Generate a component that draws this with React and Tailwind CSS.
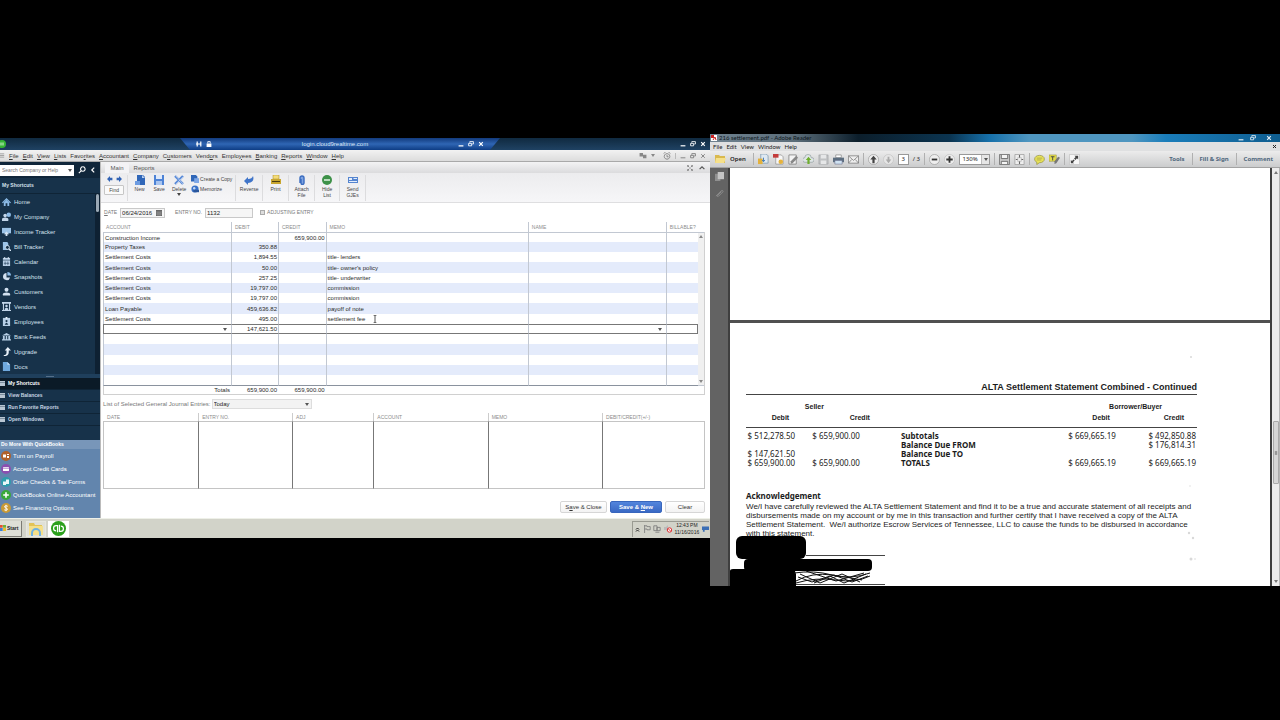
import React from "react";

const shortcuts = [
  ["Home", "home"],
  ["My Company", "company"],
  ["Income Tracker", "income"],
  ["Bill Tracker", "bill"],
  ["Calendar", "calendar"],
  ["Snapshots", "pie"],
  ["Customers", "person"],
  ["Vendors", "vendor"],
  ["Employees", "badge"],
  ["Bank Feeds", "bank"],
  ["Upgrade", "upgrade"],
  ["Docs", "doc"],
];

const sections = ["My Shortcuts", "View Balances", "Run Favorite Reports", "Open Windows"];

const offers = [
  ["Turn on Payroll", "payroll"],
  ["Accept Credit Cards", "card"],
  ["Order Checks & Tax Forms", "checks"],
  ["QuickBooks Online Accountant", "plus"],
  ["See Financing Options", "dollar"],
];

const qbMenu = [
  ["", "F", "ile"],
  ["", "E", "dit"],
  ["", "V", "iew"],
  ["", "L", "ists"],
  ["Favo", "r", "ites"],
  ["", "A", "ccountant"],
  ["", "C", "ompany"],
  ["C", "u", "stomers"],
  ["Vend", "o", "rs"],
  ["Emplo", "y", "ees"],
  ["", "B", "anking"],
  ["", "R", "eports"],
  ["", "W", "indow"],
  ["", "H", "elp"],
];

const entries = [
  ["Construction Income", "", "659,900.00", ""],
  ["Property Taxes", "350.88", "", ""],
  ["Settlement Costs", "1,894.55", "", "title- lenders"],
  ["Settlement Costs", "50.00", "", "title- owner's policy"],
  ["Settlement Costs", "257.25", "", "title- underwriter"],
  ["Settlement Costs", "19,797.00", "", "commission"],
  ["Settlement Costs", "19,797.00", "", "commission"],
  ["Loan Payable", "459,636.82", "", "payoff of note"],
  ["Settlement Costs", "495.00", "", "settlement fee"],
];

const statement = [
  ["$ 512,278.50", "$ 659,900.00", "Subtotals", "$ 669,665.19", "$ 492,850.88"],
  ["", "", "Balance Due FROM", "", "$ 176,814.31"],
  ["$ 147,621.50", "", "Balance Due TO", "", ""],
  ["$ 659,900.00", "$ 659,900.00", "TOTALS", "$ 669,665.19", "$ 669,665.19"],
];

/* ---------- drawings ---------- */

const navShapes = {
  home: <g fill="#8dbce8"><path d="M0 6 5 1l5 5-1 1-4-4-4 4z" /><path d="M2 6l3-3 3 3v4H6V7H4v3H2z" /></g>,
  company: <g fill="#c3d6ea"><circle cx="3.5" cy="4" r="2" /><path d="M0 10V8q0-2 3.500-2T7 8v2z" /><circle cx="7.500" cy="3" r="2.500" fill="#8dbce8" /></g>,
  income: <g><path d="M0 1h10v6H0z" fill="#9cc4e8" /><path d="M5 5l3 3H6v2H4V8H2z" fill="#d6e6f5" /></g>,
  bill: <g><path d="M1 0h5l1 2v7H1z" fill="#9cc4e8" /><circle cx="6" cy="6" r="2.200" fill="#17324a" stroke="#d6e6f5" /><path d="M7.500 7.500 10 10" stroke="#d6e6f5" strokeWidth="1.500" /></g>,
  calendar: <g><path d="M1 1h8v9H1z" fill="#b8cfe6" /><path d="M1 3.500h8M3.500 5v4M6.500 5v4M2 7h6" stroke="#17324a" strokeWidth=".6" /><path d="M3 0v2M7 0v2" stroke="#e5eef8" /></g>,
  pie: <g><path d="M5 5V1a4 4 0 1 0 4 5H5z" fill="#d3e1f0" /><path d="M6 4V0a4 4 0 0 1 4 4z" fill="#8dbce8" /></g>,
  person: <g fill="#d3e1f0"><circle cx="5" cy="3" r="2.200" /><path d="M1 9.500V8q0-2 4-2t4 2v1.500z" /></g>,
  vendor: <g fill="#c3d6ea"><path d="M0 0h10v2H0zM1 2h1.200v8H1zM7.800 2H9v8H7.800z" /><circle cx="5" cy="4.500" r="1.400" /><path d="M3 9V7.500q2-2 4 0V9zM0 9h10v1H0z" /></g>,
  badge: <g><path d="M1 1h8v9H1z" fill="#b8cfe6" /><path d="M4 0h2v2H4z" fill="#e5eef8" /><circle cx="5" cy="4.500" r="1.200" fill="#17324a" /><path d="M3 8.500q2-4 4 0z" fill="#17324a" /></g>,
  bank: <g fill="#b8cfe6"><path d="M0 4l5-3 5 3zM1 4.500h2V8H1zM4.200 4.500h1.600V8H4.200zM7 4.500h2V8H7zM0 8h10v1.500H0z" /></g>,
  upgrade: <path d="M2 9q3 0 3-3V4H3l3.500-4L10 4H7.500v2q0 4-5.500 4z" fill="#e8f0f8" />,
  doc: <g><path d="M1 0h5l3 3v7H1z" fill="#6fa9de" /><path d="M6 0v3h3z" fill="#c3dcf4" /></g>,
};

function NavIcon({ kind }) {
  return <svg viewBox="0 0 10 10" className="size-[9px] shrink-0" aria-hidden="true">{navShapes[kind]}</svg>;
}

const offerShapes = {
  payroll: <g><circle cx="5" cy="5" r="5" fill="#b0602a" /><path d="M2 3.500h3v3H2zM6 3h2v1H6zM6 5h2v2H6z" fill="#fff" /></g>,
  card: <g><circle cx="5" cy="5" r="5" fill="#8b50b0" /><rect x="2" y="3" width="6" height="4" rx=".6" fill="#fff" /><path d="M2 4.200h6" stroke="#8b50b0" strokeWidth=".7" /></g>,
  checks: <g><circle cx="5" cy="5" r="5" fill="#2f9dac" /><path d="M2 4.500h3V8H2zM5 2.500h3V7H5z" fill="#e8f7f8" /></g>,
  plus: <g><circle cx="5" cy="5" r="5" fill="#3aa83a" /><path d="M4.200 2.200h1.600v2h2v1.600h-2v2H4.200v-2h-2V4.200h2z" fill="#fff" /></g>,
  dollar: <g><circle cx="5" cy="5" r="5" fill="#c99a35" /><path d="M6.800 3.300Q5 2.300 3.800 3.200T5 5t1.200 1.800-3 0M5 1.800v6.400" fill="none" stroke="#fff" strokeWidth=".9" /></g>,
};

function OfferIcon({ kind }) {
  return <svg viewBox="0 0 10 10" className="size-[10px] shrink-0" aria-hidden="true">{offerShapes[kind]}</svg>;
}

const toolShapes = {
  new: <g><path d="M2 0h6l2 2v8H2z" fill="#2f66b8" /><path d="M0 6h5v4H0z" fill="#6d9be0" /><path d="M7 0v3h3" fill="#b9d0f2" /></g>,
  save: <g><path d="M0 0h10v10H0z" fill="#4d83d6" /><path d="M2 0h6v4H2z" fill="#dfe9f9" /><path d="M2 6h6v4H2z" fill="#a9c5f0" /></g>,
  delete: <g stroke="#5a8bd8" strokeWidth="2.400" fill="none"><path d="M1 1l8 8M9 1L1 9" /><path d="M2 1l7 8M9 2L2 9" stroke="#dbe7fa" strokeWidth=".6" /></g>,
  copy: <g><path d="M0 0h6l2 2v6H0z" fill="#2f66b8" /><path d="M4 4h6v6H4z" fill="#7ea7e6" /></g>,
  memorize: <g><circle cx="5" cy="5" r="4.500" fill="#3a72c8" /><path d="M3 6h7v3H3z" fill="#2a569c" /><circle cx="4" cy="4" r="1.500" fill="#c6d9f5" /></g>,
  reverse: <path d="M0 6l4-4v2q4 0 5-3 2 6-5 7v2z" fill="#3f74c9" />,
  print: <g><path d="M2 0h6v4H2z" fill="#f3dc7a" stroke="#a88a20" strokeWidth=".5" /><path d="M0 4h10v5H0z" fill="#c8a62f" /><path d="M1 6h8v1H1z" fill="#4a3d10" /></g>,
  attach: <path d="M3 8V3a2 2 0 0 1 4 0v5a1.500 1.500 0 0 1-3 0V4" fill="#7ea3e0" stroke="#3a6cc0" strokeWidth="1.400" />,
  hide: <g><circle cx="5" cy="5" r="5" fill="#3d9148" /><path d="M2 4.200h6v1.600H2z" fill="#d6efd9" /></g>,
  send: <g><path d="M0 2h10v6H0z" fill="#5585d0" /><path d="M1 3h3v2H1zM5.500 3h3.500v1H5.500zM1 6h8v1H1z" fill="#e3edfb" /></g>,
};

function ToolIcon({ kind, className = "size-[10px]" }) {
  return <svg viewBox="0 0 10 10" className={className} aria-hidden="true">{toolShapes[kind]}</svg>;
}

function Glyph({ d, className = "size-[6px]", w = 1.4 }) {
  return (
    <svg viewBox="0 0 10 10" className={className} fill="none" stroke="currentColor" strokeWidth={w} aria-hidden="true">
      <path d={d} />
    </svg>
  );
}

const MIN = "M1 8h8";
const RESTORE = "M3 3V1h6v4H7M1 4h5v4H1z";
const CLOSE = "M2 2l6 6M8 2L2 8";

function Caret({ className = "text-[#555]" }) {
  return <svg viewBox="0 0 4 3" className={"h-[3px] w-1 shrink-0 " + className} aria-hidden="true"><path d="M0 0h4L2 3z" fill="currentColor" /></svg>;
}

/* ---------- accounting window ---------- */

function TitleBar() {
  return (
    <header className="grid h-3 grid-cols-[180fr_320fr_210fr] items-center bg-linear-to-b from-[#102a40] to-[#1f4263] text-white">
      <svg viewBox="0 0 8 8" className="size-2 -translate-x-0.5" aria-hidden="true">
        <circle cx="4" cy="4" r="4" fill="#35b535" />
        <path d="M3 2.500v3M5 2.500v3" stroke="#d9f5d9" />
      </svg>
      <div className="flex h-3 items-center justify-between bg-linear-to-b from-[#123a7c] via-[#2f66b4] to-[#0e3d85] pr-4 pl-4 [clip-path:polygon(0_0,100%_0,calc(100%-10px)_100%,10px_100%)]">
        <span className="flex gap-1">
          <Glyph d="M0 5h2M2 1v8M2 5h6M8 1v8" w={2} />
          <svg viewBox="0 0 10 10" className="size-[6px]" aria-hidden="true"><path d="M1 4h8v6H1z" fill="#fff" /><path d="M3 4V1h4v3" fill="none" stroke="#fff" strokeWidth="1.400" /></svg>
        </span>
        <h1 className="text-[6px] leading-none text-[#dce8f8]">login.cloud9realtime.com</h1>
        <span className="flex gap-1">
          <button aria-label="Minimize session"><Glyph d={MIN} w={2} /></button>
          <button aria-label="Restore session"><Glyph d={RESTORE} /></button>
          <button aria-label="Close session"><Glyph d={CLOSE} w={2} /></button>
        </span>
      </div>
      <div className="flex justify-end gap-1 pr-1">
        <button aria-label="Minimize"><Glyph d={MIN} w={2} /></button>
        <button aria-label="Restore"><Glyph d={RESTORE} /></button>
        <button aria-label="Close"><Glyph d={CLOSE} w={2} /></button>
      </div>
    </header>
  );
}

function MenuBar() {
  return (
    <div className="flex h-3 items-center justify-between border-b border-[#a9a9a9] bg-linear-to-b from-[#f2f2f2] to-[#dcdcdc] pr-1 text-[#333]">
      <nav className="flex items-center gap-1 text-[6px] leading-none" aria-label="Menu">
        <svg viewBox="0 0 6 6" className="size-[5px]" aria-hidden="true"><path d="M0 1h5M0 3h5M0 5h5" stroke="#999" /></svg>
        {qbMenu.map(([a, u, b]) => (
          <button key={a + u + b}>{a}<u>{u}</u>{b}</button>
        ))}
      </nav>
      <div className="flex items-center gap-1 text-[#777]">
        <svg viewBox="0 0 8 7" className="h-[6px] w-2" aria-hidden="true"><path d="M0 0h4v4H0zM4 2h4v4H4z" fill="#888" /></svg>
        <Caret className="text-[#888]" />
        <Glyph d="M5 2a3.500 3.500 0 1 0 .1 0M5 3.500V6h2M1 2l2-2M9 2L7 0" className="ml-1 size-2" w={1} />
        <span className="h-[6px] border-l border-[#bbb]" />
        <button aria-label="Minimize form"><Glyph d={MIN} /></button>
        <button aria-label="Restore form"><Glyph d={RESTORE} /></button>
        <button aria-label="Close form"><Glyph d={CLOSE} /></button>
      </div>
    </div>
  );
}

function Sidebar() {
  return (
    <aside className="flex w-[14.1%] shrink-0 flex-col bg-[#17324a] text-[6px] leading-none whitespace-nowrap text-[#d5e0ea]">
      <div className="flex h-4 items-center bg-[#10263a] text-white">
        <div className="flex h-[11px] w-[74px] items-center bg-white pr-[2px]">
          <input aria-label="Search Company or Help" placeholder="Search Company or Help" className="h-full min-w-0 flex-1 bg-transparent pl-[2px] text-[5px] text-[#444] placeholder:text-[#777]" />
          <Caret />
        </div>
        <button aria-label="Search" className="ml-1"><Glyph d="M6 1a2.800 2.800 0 1 0 .1 0M4 6L1 9" className="size-2" /></button>
        <button aria-label="Collapse sidebar" className="mr-1 ml-auto"><Glyph d="M7 1L3 5l4 4" w={2} /></button>
      </div>
      <h2 className="flex h-4 items-center border-b border-[#0f2436] pl-[2px] text-[5px] font-bold">My Shortcuts</h2>
      <div className="flex">
        <nav className="flex-1" aria-label="Shortcuts">
          {shortcuts.map(([label, kind]) => (
            <a key={label} href="#" className="flex h-[15px] items-center gap-[3px] pl-[2px]"><NavIcon kind={kind} />{label}</a>
          ))}
        </nav>
        <div className="w-[5px] bg-[#0e2133]"><div className="mr-px ml-px h-[18px] rounded-sm bg-[#9aa8b5]" /></div>
      </div>
      <div className="flex h-1 items-center justify-center bg-[#1f3f5c]"><span className="h-px w-2 bg-[#56708a]" /></div>
      <div className="flex-1">
        {sections.map((label, i) => (
          <button key={label} className={"flex h-3 w-full items-center gap-[3px] border-b border-[#0f2436] text-[5px] font-bold " + (i === 0 ? "bg-[#0b1a27] text-white" : "text-[#c8d5e2]")}>
            <svg viewBox="0 0 5 5" className="size-[5px]" aria-hidden="true"><path d="M0 0h5v5H0z" fill="#b9c6d2" /><path d="M0 1.500h5" stroke="#54687b" strokeWidth=".6" /></svg>
            {label}
          </button>
        ))}
      </div>
      <section className="bg-[#6285ad] text-white">
        <h2 className="flex h-[9px] items-center bg-[#7896b9] pl-px text-[5px] font-bold">Do More With QuickBooks</h2>
        <div className="flex flex-col gap-[3px] pt-[2px] pb-[5px]">
          {offers.map(([label, kind]) => (
            <a key={label} href="#" className="flex items-center gap-[2px] pl-px"><OfferIcon kind={kind} />{label}</a>
          ))}
        </div>
      </section>
    </aside>
  );
}

function Tool({ kind, lines, className, caret }) {
  return (
    <button className={"flex h-[26px] flex-col items-center " + className}>
      <ToolIcon kind={kind} />
      <span className="mt-px text-center leading-[6px]">{lines[0]}{lines[1] && <br />}{lines[1]}</span>
      {caret && <Caret className="mt-px" />}
    </button>
  );
}

function Toolbar() {
  const sep = " border-r border-[#dcdcde]";
  return (
    <div className="flex h-[30px] items-start border-b border-[#dedee0] bg-linear-to-b from-[#ececee] to-[#f6f6f8] pt-[2px] pl-[3px] text-[5px] text-[#444]">
      <div className={"flex h-[26px] w-6 flex-col items-start gap-[3px]" + sep}>
        <div className="flex w-5 justify-center gap-[3px] pt-px">
          <button aria-label="Previous"><svg viewBox="0 0 10 10" className="size-[6px]"><path d="M0 5l5-5v3h4v4H5v3z" fill="#3163b5" /></svg></button>
          <button aria-label="Next"><svg viewBox="0 0 10 10" className="size-[6px]"><path d="M10 5L5 0v3H1v4h4v3z" fill="#3163b5" /></svg></button>
        </div>
        <button className="h-[10px] w-5 rounded-[1px] border border-[#c6c6c6] bg-[#fafafa] leading-none">Find</button>
      </div>
      <Tool kind="new" lines={["New"]} className="w-[23px]" />
      <Tool kind="save" lines={["Save"]} className="w-4" />
      <Tool kind="delete" lines={["Delete"]} className="w-6" caret />
      <div className={"flex h-[26px] w-[45px] flex-col items-start gap-[2px]" + sep}>
        <button className="flex items-center gap-px whitespace-nowrap leading-none"><ToolIcon kind="copy" className="size-2" />Create a Copy</button>
        <button className="flex items-center gap-px leading-none"><ToolIcon kind="memorize" className="size-2" />Memorize</button>
      </div>
      <Tool kind="reverse" lines={["Reverse"]} className={"w-[27px]" + sep} />
      <Tool kind="print" lines={["Print"]} className={"w-[26px]" + sep} />
      <Tool kind="attach" lines={["Attach", "File"]} className={"w-[26px]" + sep} />
      <Tool kind="hide" lines={["Hide", "List"]} className={"w-[25px]" + sep} />
      <Tool kind="send" lines={["Send", "GJEs"]} className={"w-[26px]" + sep} />
    </div>
  );
}

function EntryForm() {
  return (
    <form className="flex h-[19px] items-center px-[3px] text-[5px] leading-none text-[#777]">
      <label htmlFor="date" className="w-4"><u>D</u>ATE</label>
      <div className="flex h-[10px] w-[45px] items-center justify-between border border-[#c9c9c9] bg-[#f6f6f6] px-px">
        <input id="date" defaultValue="06/24/2016" className="h-full w-8 bg-transparent text-[6px] text-[#222]" />
        <svg viewBox="0 0 6 6" className="mr-px size-[6px]" aria-hidden="true"><path d="M0 0h6v6H0z" fill="#666" /><path d="M0 2h6M2 2v4M4 2v4M0 4h6" stroke="#bbb" strokeWidth=".4" /></svg>
      </div>
      <label htmlFor="entryno" className="mr-[6px] ml-[10px] w-6 whitespace-nowrap">ENTRY NO.</label>
      <input id="entryno" defaultValue="1132" className="h-[10px] w-12 border border-[#c9c9c9] bg-[#f6f6f6] px-px text-[6px] text-[#222]" />
      <input id="adjusting" type="checkbox" className="mr-[2px] ml-[7px] size-[5px] appearance-none border border-[#aaa] bg-[#ddd]" />
      <label htmlFor="adjusting" className="whitespace-nowrap">ADJUSTING ENTRY</label>
    </form>
  );
}

function Journal() {
  const th = "h-[10px] p-0 pl-[3px] text-left align-middle text-[5px] font-normal text-[#8c8c8c]";
  const line = " border-l border-[#c2c8d2]";
  return (
    <div className="flex pr-[5px] pl-[2px]">
      <table className="flex-1 table-fixed border-separate border-spacing-0 text-[6px] leading-none text-[#2b2b2b]">
        <colgroup>
          <col className="w-[21.5%]" /><col className="w-[7.9%]" /><col className="w-[8%]" /><col className="w-[34%]" /><col className="w-[23.2%]" /><col />
        </colgroup>
        <thead>
          <tr>
            <th className={th}>ACCOUNT</th>
            <th className={th + line}>DEBIT</th>
            <th className={th + line}>CREDIT</th>
            <th className={th + line}>MEMO</th>
            <th className={th + line}>NAME</th>
            <th className={th + line}>BILLABLE?</th>
          </tr>
        </thead>
        <tbody>
          {entries.map(([account, debit, credit, memo], i) => {
            const edge = line + (i === 0 ? " border-t" : "");
            return (
              <tr key={i} className={i % 2 ? "bg-[#e4ebfb]" : "bg-white"}>
                <td className={"p-0 pl-px" + edge + (i === 3 || i === 7 ? " h-[11px]" : " h-[10px]")}>{account}</td>
                <td className={"p-0 pr-px text-right" + edge}>{debit}</td>
                <td className={"p-0 pr-px text-right" + edge}>{credit}</td>
                <td className={"p-0 pl-px" + edge}>
                  {i === 8 ? (
                    <span className="flex h-[6px] items-center gap-[6px]">{memo}<Glyph d="M3 0h1.500l.5 1 .5-1H7M5 1v8M3 10h1.500l.5-1 .5 1H7" className="size-2" w={1} /></span>
                  ) : memo}
                </td>
                <td className={"p-0" + edge} />
                <td className={"p-0" + edge} />
              </tr>
            );
          })}
          <tr className="bg-white">
            <td className="h-[10px] border-y border-l border-[#777] p-0 pr-1">
              <div className="flex items-center"><input aria-label="Account" className="h-2 min-w-0 flex-1 text-[6px]" /><Caret /></div>
            </td>
            <td className="border-y border-l border-y-[#777] border-l-[#c2c8d2] p-0 pr-px text-right">147,621.50</td>
            <td className="border-y border-l border-y-[#777] border-l-[#c2c8d2] p-0" />
            <td className="border-y border-l border-y-[#777] border-l-[#c2c8d2] p-0" />
            <td className="border-y border-l border-y-[#777] border-l-[#c2c8d2] p-0 pr-1"><div className="flex justify-end"><Caret /></div></td>
            <td className="border border-[#777] border-l-[#c2c8d2] p-0" />
          </tr>
          {[0, 1, 2, 3, 4].map((i) => (
            <tr key={i} className={i % 2 ? "bg-[#e4ebfb]" : "bg-white"}>
              {[0, 1, 2, 3, 4, 5].map((c) => (
                <td key={c} className={"p-0" + line + (i === 4 ? " h-[11px] border-b border-b-[#8a929e]" : i === 1 ? " h-[11px]" : " h-[10px]")} />
              ))}
            </tr>
          ))}
        </tbody>
        <tfoot>
          <tr>
            <td className="h-[9px] border-b border-l border-[#d0d0d0] p-0 pr-px text-right">Totals</td>
            <td className="border-b border-[#d0d0d0] p-0 pr-px text-right">659,900.00</td>
            <td className="border-b border-[#d0d0d0] p-0 pr-px text-right">659,900.00</td>
            <td colSpan={3} className="border-b border-[#d0d0d0] p-0" />
          </tr>
        </tfoot>
      </table>
      <div className="mt-[10px] flex w-[7px] flex-col border-r border-b border-[#d0d0d0]">
        <div className="flex flex-1 flex-col items-center justify-between border-y border-[#c2c8d2] bg-[#f0f0f0] py-[2px]">
          <Caret className="rotate-180 text-[#888]" />
          <Caret className="text-[#888]" />
        </div>
        <div className="h-2" />
      </div>
    </div>
  );
}

function SelectedEntries() {
  const cols = ["DATE", "ENTRY NO.", "ADJ", "ACCOUNT", "MEMO", "DEBIT/CREDIT(+/-)"];
  return (
    <section className="flex-1 pr-[5px] pl-[2px]">
      <div className="flex h-[18px] items-center gap-px text-[6px] leading-none text-[#777]">
        <label htmlFor="period" className="whitespace-nowrap">List of Selected General Journal Entries:</label>
        <div className="relative w-[100px]">
          <select id="period" className="h-[10px] w-full appearance-none border border-[#ddd] bg-[#f3f3f3] pl-px text-[6px] leading-none text-[#222]"><option>Today</option></select>
          <span className="pointer-events-none absolute top-[4px] right-[3px]"><Caret /></span>
        </div>
      </div>
      <table className="w-full table-fixed border-separate border-spacing-0 text-[5px] leading-none text-[#8c8c8c]">
        <colgroup><col className="w-[15.8%]" /><col className="w-[15.6%]" /><col className="w-[13.5%]" /><col className="w-[19%]" /><col className="w-[19%]" /><col /></colgroup>
        <thead>
          <tr>
            {cols.map((c, i) => (
              <th key={c} className={"h-2 border-l p-0 pl-[3px] text-left font-normal whitespace-nowrap " + (i ? "border-[#ccc]" : "border-transparent")}>{c}</th>
            ))}
          </tr>
        </thead>
        <tbody>
          <tr>
            {cols.map((c, i) => (
              <td key={c} className={"h-[68px] border-y border-l border-y-[#c4c4c4] p-0 " + (i === 0 ? "border-l-[#c4c4c4]" : i === 5 ? "border-r border-l-[#777] border-r-[#c4c4c4]" : "border-l-[#777]")} />
            ))}
          </tr>
        </tbody>
      </table>
    </section>
  );
}

function FormButtons() {
  const plain = "h-3 rounded-[2px] border border-[#d6d6d6] bg-linear-to-b from-white to-[#f3f3f3] text-[#333]";
  return (
    <div className="flex justify-end gap-[3px] pr-[5px] pb-[5px] text-[6px] leading-none">
      <button className={plain + " w-[47px]"}>S<u>a</u>ve &amp; Close</button>
      <button className="h-3 w-[52px] rounded-[2px] border border-[#3866bd] bg-linear-to-b from-[#5385dd] to-[#3a69c4] font-bold text-white">Save &amp; <u>N</u>ew</button>
      <button className={plain + " w-[40px]"}>Clear</button>
    </div>
  );
}

function QbLogo() {
  return (
    <svg viewBox="0 0 16 16" className="size-[15px]" aria-hidden="true">
      <circle cx="8" cy="8" r="8" fill="#2ca01c" />
      <g fill="none" stroke="#fff" strokeWidth="1.300">
        <path d="M7 12V5H5.500a2.600 2.600 0 0 0 0 5.500" />
        <path d="M9 4v7h1.500a2.600 2.600 0 0 0 0-5.500" />
      </g>
    </svg>
  );
}

function Taskbar() {
  return (
    <footer className="flex h-5 items-center border-t border-[#eef0e8] bg-[#d2d3c9] text-[6px] leading-none text-[#222]">
      <button className="flex h-4 w-[22px] items-center gap-px border-r border-b border-[#7b7b74] bg-[#dedfd6] font-bold">
        <svg viewBox="0 0 6 6" className="size-[6px] shrink-0" aria-hidden="true"><path d="M0 0h2.700v2.700H0z" fill="#e5502c" /><path d="M3 0h3v2.700H3z" fill="#6eb33a" /><path d="M0 3h2.700v3H0z" fill="#3b7fd4" /><path d="M3 3h3v3H3z" fill="#edbc2d" /></svg>
        <span className="text-[5px]">Start</span>
      </button>
      <button aria-label="File Explorer" className="ml-1 flex h-4 w-5 items-center justify-center border border-[#e6e7df] bg-[#dfe0d8]">
        <svg viewBox="0 0 14 14" className="size-[14px]" aria-hidden="true"><path d="M0 1h5l1 2h7v9H0z" fill="#e3c455" /><path d="M0 4h14v9H0z" fill="#f5e08a" /><path d="M3 14V11a4 4 0 0 1 8 0v3" fill="none" stroke="#6fb2e2" strokeWidth="2" /></svg>
      </button>
      <button aria-label="QuickBooks" className="ml-[2px] flex h-4 w-[21px] items-center justify-center bg-white"><QbLogo /></button>
      <div className="mr-px ml-auto flex h-4 w-[77px] items-center justify-between border-t border-l border-[#9a9b92] pl-[2px]">
        <Glyph d="M2 5l3-3 3 3M2 9l3-3 3 3" className="size-[5px]" w={2} />
        <Glyph d="M2 0v10M2 1h3v1h4v4H5V5H2" className="size-2 text-[#777]" w={1} />
        <Glyph d="M1 1h4v6H1zM5 3h4v4H5zM3 9h5" className="size-2 text-[#777]" w={1} />
        <svg viewBox="0 0 8 8" className="size-2" aria-hidden="true"><path d="M0 2h2l2-2v6L2 5H0z" fill="#bbb" /><circle cx="5.500" cy="5" r="2.200" fill="#fff" stroke="#d33" /><path d="M4 3.500l3 3" stroke="#d33" /></svg>
        <div className="w-[25px] text-center text-[5px] leading-[7px]">12:43 PM<br />11/16/2016</div>
        <svg viewBox="0 0 8 6" className="h-[6px] w-[7px]" aria-hidden="true"><path d="M0 0h8v4H3v2H1V4H0z" fill="#3b6fb5" /></svg>
      </div>
    </footer>
  );
}

function AccountingWindow() {
  return (
    <section className="mt-1 flex min-h-[400px] min-w-0 flex-col bg-white" aria-label="QuickBooks">
      <TitleBar />
      <MenuBar />
      <div className="flex flex-1">
        <Sidebar />
        <main className="flex min-w-0 flex-1 flex-col border-l border-[#bbb]">
          <div className="flex h-[11px] items-end justify-between bg-linear-to-b from-[#f3f3f4] to-[#dbdbdd] text-[6px] leading-none text-[#555]">
            <div role="tablist" className="flex items-center">
              <button role="tab" aria-selected="true" className="ml-1 h-[10px] w-6 rounded-t-[2px] bg-[#f3f3f5]">Main</button>
              <button role="tab" aria-selected="false" className="h-[10px] w-[30px]">Reports</button>
            </div>
            <div className="flex items-center gap-[6px] pr-[5px] pb-[2px]">
              <button aria-label="Expand"><Glyph d="M1 1l3 3M9 1L6 4M1 9l3-3M9 9L6 6M1 3V1h2M7 1h2v2M1 7v2h2M7 9h2V7" w={1} /></button>
              <button aria-label="Collapse"><Glyph d="M1 7l4-4 4 4" w={2} /></button>
            </div>
          </div>
          <Toolbar />
          <EntryForm />
          <Journal />
          <SelectedEntries />
          <FormButtons />
        </main>
      </div>
      <Taskbar />
    </section>
  );
}

/* ---------- document reader ---------- */

const readerShapes = {
  folder: <g><path d="M1 2h4l1 1h5v7H1z" fill="#d9b94e" /><path d="M2 5h10l-2 5H1z" fill="#f5e08a" /></g>,
  export: <g><path d="M3 0h6l2 2v8H3z" fill="#dfe9f2" stroke="#6b8aa5" strokeWidth=".7" /><path d="M0 5h5v6H0z" fill="#e3b13c" /><path d="M6 4v4M4.500 6.500L6 8.500l1.500-2" stroke="#3e79b8" fill="none" /></g>,
  pdf: <g><path d="M3 1h6l2 2v8H3z" fill="#f7f7f7" stroke="#888" strokeWidth=".7" /><path d="M0 0h6v4H0z" fill="#c43c3c" /><circle cx="8.500" cy="8.500" r="2.500" fill="#e6b33c" /></g>,
  edit: <g><path d="M1 1h8v10H1z" fill="#f4f4f4" stroke="#777" strokeWidth=".8" /><path d="M3 8l6-6 2 2-6 6-2 .5z" fill="#888" /></g>,
  cloud: <g><path d="M2 9a2.500 2.500 0 0 1 0-5 3.500 3.500 0 0 1 7 0 2.500 2.500 0 0 1 1 5z" fill="#dfe5e6" stroke="#8a9a9a" strokeWidth=".7" /><path d="M6 3l3 3.500H7.200V11H4.800V6.500H3z" fill="#6fae2e" /></g>,
  save: <g><path d="M1 1h10v10H1z" fill="#bfc1c3" stroke="#9a9c9e" strokeWidth=".6" /><path d="M3 1h6v4H3zM3 7h6v4H3z" fill="#e6e7e8" /></g>,
  print: <g><path d="M3 1h6v3H3z" fill="#fff" stroke="#666" strokeWidth=".6" /><path d="M0 4h12v5H0z" fill="#5d6f80" /><path d="M2 7h8v4H2z" fill="#cfe2f2" stroke="#557" strokeWidth=".5" /></g>,
  mail: <g fill="#eee" stroke="#777" strokeWidth=".8"><path d="M.5 2h11v8H.5z" /><path d="M.5 2L6 7l5.500-5M.5 10L4 6M11.500 10L8 6" fill="none" /></g>,
  up: <g><circle cx="6" cy="6" r="5.500" fill="#eee" stroke="#999" strokeWidth=".7" /><path d="M6 2l3.500 4H7.200v4H4.800V6H2.500z" fill="#444" /></g>,
  down: <g><circle cx="6" cy="6" r="5.500" fill="#e6e6e6" stroke="#c2c2c2" strokeWidth=".7" /><path d="M6 10l3-4H7V3H5v3H3z" fill="#aaa" /></g>,
  minus: <g><circle cx="6" cy="6" r="5.500" fill="#eee" stroke="#999" strokeWidth=".7" /><path d="M3 5h6v2H3z" fill="#333" /></g>,
  plus: <g><circle cx="6" cy="6" r="5.500" fill="#eee" stroke="#bbb" strokeWidth=".7" /><path d="M5 2.500h2V5h2.500v2H7v2.500H5V7H2.500V5H5z" fill="#333" /></g>,
  width: <g><path d="M.5.5h11v11H.5z" fill="#ccc" stroke="#777" /><path d="M2.500 1v4h7V1M2.500 11V8h7v3" fill="#f4f4f4" stroke="#666" /></g>,
  fit: <g><path d="M1 .5h10v11H1z" fill="#eee" stroke="#999" strokeWidth=".8" /><path d="M6 1v3M6 8v3M2 6h2M8 6h2" stroke="#666" strokeWidth="1.200" /><path d="M4 4h4v4H4z" fill="none" stroke="#999" strokeWidth=".5" /></g>,
  comment: <g><path d="M6 1.500c3 0 5.300 1.500 5.300 4S9 9.500 6 9.500L3 11.500V9C1.500 8.200.7 7 .7 5.500c0-2.500 2.300-4 5.300-4z" fill="#e8e25a" stroke="#8d8a3a" strokeWidth=".7" /><path d="M3 4.500h6M3 6.500h5" stroke="#8d8a3a" strokeWidth=".6" /></g>,
  mark: <g><path d="M0 1h8v7H0z" fill="#e3dc4a" stroke="#8d8a3a" strokeWidth=".5" /><path d="M2 3h4M4 3v4" stroke="#444" /><path d="M6 8l4-5 2 1-4 6-2 1z" fill="#777" /></g>,
  full: <g><path d="M.5.500h11v11H.5z" fill="#f6f6f6" stroke="#bbb" strokeWidth=".7" /><path d="M6 2h4v4L8.700 4.700 7 6.500 5.500 5l1.800-1.700zM2 6.500l1.200 1.200L5 6l1.200 1.200-1.900 1.900L5.500 10H2z" fill="#444" /></g>,
};

function ReaderTool({ kind, label }) {
  return (
    <button aria-label={label}><svg viewBox="0 0 12 12" className="size-[11px] shrink-0" aria-hidden="true">{readerShapes[kind]}</svg></button>
  );
}

function Sep() {
  return <span className="h-3 border-l border-[#b0b0b0]" />;
}

function ReaderWindow() {
  return (
    <section className="flex min-w-0 flex-col bg-[#636363]" aria-label="Adobe Reader">
      <header className="flex h-2 items-center gap-[2px] bg-[linear-gradient(to_right,#6f8290_0%,#5b6d79_15%,#0c1e2b_26%,#0b3450_42%,#1670aa_49%,#4f96c0_56%,#4f96c0_74%,#1a7dba_80%,#0f5d8f_100%)] pl-px font-['Lato',sans-serif] text-[6px] leading-none text-[#0d161c]">
        <svg viewBox="0 0 6 6" className="size-[6px]" aria-hidden="true"><path d="M0 0h6v6H0z" fill="#fff" /><path d="M0 0h3v3H0z" fill="#c22" /><path d="M2 5l2-3 1 3" fill="none" stroke="#c22" /></svg>
        <h1>216 settlement.pdf - Adobe Reader</h1>
        <span className="mr-2 ml-auto flex gap-[6px] text-[#e5eef5]">
          <button aria-label="Minimize reader"><Glyph d={MIN} w={2} /></button>
          <button aria-label="Restore reader"><Glyph d={RESTORE} /></button>
          <button aria-label="Close reader" className="ml-1"><Glyph d={CLOSE} w={2} /></button>
        </span>
      </header>
      <div className="flex h-[9px] items-center justify-between bg-[#dfe0e1] pr-[3px] pl-[3px] font-['Lato',sans-serif] text-[6px] leading-none text-[#222]">
        <nav className="flex gap-1" aria-label="Reader menu">
          {["File", "Edit", "View", "Window", "Help"].map((m) => <button key={m}>{m}</button>)}
        </nav>
        <button aria-label="Close document"><Glyph d={CLOSE} className="size-[5px]" w={2} /></button>
      </div>
      <div className="flex h-[17px] items-center gap-1 border-b border-[#a3a3a3] bg-linear-to-b from-[#ececec] to-[#cbcccd] pr-[7px] pl-1 font-['Noto_Sans',sans-serif] text-[6px] leading-none text-[#222]">
        <button className="mr-[3px] flex items-center gap-1">
          <svg viewBox="0 0 12 12" className="size-3" aria-hidden="true">{readerShapes.folder}</svg><span className="font-semibold">Open</span>
        </button>
        <Sep />
        <ReaderTool kind="export" label="Export" />
        <ReaderTool kind="pdf" label="Create PDF" />
        <ReaderTool kind="edit" label="Edit PDF" />
        <ReaderTool kind="cloud" label="Store online" />
        <ReaderTool kind="save" label="Save" />
        <ReaderTool kind="print" label="Print" />
        <ReaderTool kind="mail" label="Email" />
        <Sep />
        <ReaderTool kind="up" label="Previous page" />
        <ReaderTool kind="down" label="Next page" />
        <input aria-label="Page" defaultValue="3" className="h-[11px] w-[11px] border border-[#999] bg-white text-center text-[6px]" />
        <span className="whitespace-nowrap">/ 3</span>
        <Sep />
        <ReaderTool kind="minus" label="Zoom out" />
        <ReaderTool kind="plus" label="Zoom in" />
        <div className="flex h-[11px] w-[31px] items-center justify-between border border-[#999] bg-white">
          <input aria-label="Zoom" defaultValue="130%" className="h-full w-5 text-center text-[6px]" />
          <button aria-label="Zoom levels" className="flex h-full w-2 items-center justify-center border-l border-[#bbb] bg-[#e6e6e6]"><Caret /></button>
        </div>
        <Sep />
        <ReaderTool kind="width" label="Fit width" />
        <ReaderTool kind="fit" label="Fit page" />
        <Sep />
        <ReaderTool kind="comment" label="Add comment" />
        <ReaderTool kind="mark" label="Highlight text" />
        <Sep />
        <ReaderTool kind="full" label="Read mode" />
        <div className="ml-auto flex items-center gap-[7px] font-bold whitespace-nowrap text-[#4e667c]">
          <button>Tools</button><Sep /><button>Fill &amp; Sign</button><Sep /><button>Comment</button>
        </div>
      </div>
      <div className="flex">
        <aside className="flex w-[18px] shrink-0 flex-col items-center gap-2 pt-1 text-[#c9c9c9]">
          <button aria-label="Page thumbnails"><svg viewBox="0 0 10 10" className="size-[9px]"><path d="M0 2h6v8H0z" fill="#8f8f8f" /><path d="M3 0h7v8H3z" fill="#c4c4c4" /></svg></button>
          <button aria-label="Attachments" className="text-[#8d8d8d]"><Glyph d="M1 8l6-6q2-1 2 1L4 8q-2 1-1-1l4-4" className="size-[9px]" w={1} /></button>
        </aside>
        <div className="flex min-w-0 flex-1 flex-col gap-[3px] border-x-2 border-[#3f3f3f] bg-[#505050]">
          <div className="h-[152px] bg-white" />
          <StatementPage />
        </div>
        <div className="flex w-2 shrink-0 flex-col items-center justify-between border-r border-[#b5b5b5] bg-[#ececec] py-[3px]">
          <Caret className="rotate-180 text-[#777]" />
          <div className="mt-[247px] mb-auto flex h-[63px] w-[6px] items-center justify-center rounded-[1px] border border-[#aaa] bg-[#d6d6d6]"><Glyph d="M2 2h6M2 5h6M2 8h6" className="size-1" w={1} /></div>
          <Caret className="text-[#777]" />
        </div>
      </div>
    </section>
  );
}

function StatementPage() {
  const head = "p-0 h-[11px] text-right text-[7px] font-bold leading-none";
  const sub = "border-b border-[#444] p-0 pb-[4px] text-right text-[7px] font-bold leading-none";
  return (
    <article className="relative h-[263px] bg-white pt-[60px] pr-[73px] pl-4 font-['Liberation_Sans',sans-serif] text-[8px] leading-[9px] text-[#1c1c1c]">
      <h2 className="border-b border-[#444] pb-[2px] text-right text-[9px] font-bold">ALTA Settlement Statement Combined - Continued</h2>
      <table className="mt-[6px] w-full table-fixed border-separate border-spacing-0 font-['Noto_Sans',sans-serif]">
        <colgroup><col className="w-[10.9%]" /><col className="w-[16.8%]" /><col /><col className="w-[17%]" /><col className="w-[18%]" /></colgroup>
        <thead className="font-['Liberation_Sans',sans-serif]">
          <tr>
            <th colSpan={2} className={head + " pr-[47px]"}>Seller</th>
            <th className={head} />
            <th colSpan={2} className={head + " pr-[35px]"}>Borrower/Buyer</th>
          </tr>
          <tr>
            <th className={sub + " h-4 pr-[6px]"}>Debit</th>
            <th className={sub + " pr-px"}>Credit</th>
            <th className={sub} />
            <th className={sub + " pr-[6px]"}>Debit</th>
            <th className={sub + " pr-[13px]"}>Credit</th>
          </tr>
        </thead>
        <tbody>
          {statement.map(([sd, sc, label, bd, bc], i) => (
            <tr key={label} className="whitespace-nowrap">
              <td className={"p-0 text-right" + (i === 0 ? " pt-[3px]" : "")}>{sd}</td>
              <td className={"p-0 pr-[11px] text-right" + (i === 0 ? " pt-[3px]" : "")}>{sc}</td>
              <th className={"p-0 pl-[30px] text-left font-bold" + (i === 0 ? " pt-[3px]" : "")}>{label}</th>
              <td className={"p-0 text-right" + (i === 0 ? " pt-[3px]" : "")}>{bd}</td>
              <td className={"p-0 pr-px text-right" + (i === 0 ? " pt-[3px]" : "")}>{bc}</td>
            </tr>
          ))}
        </tbody>
      </table>
      <h3 className="mt-6 font-['Noto_Sans',sans-serif] font-bold">Acknowledgement</h3>
      <p className="mt-[2px] whitespace-nowrap">
        We/I have carefully reviewed the ALTA Settlement Statement and find it to be a true and accurate statement of all receipts and<br />
        disbursements made on my account or by me in this transaction and further certify that I have received a copy of the ALTA<br />
        Settlement Statement.&nbsp; We/I authorize Escrow Services of Tennessee, LLC to cause the funds to be disbursed in accordance<br />
        with this statement.
      </p>
      <svg viewBox="0 0 156 50" className="absolute bottom-0 left-0 h-[50px] w-[156px]" aria-hidden="true">
        <path d="M76 19.500h79M66 48.500h89" stroke="#444" strokeWidth="1" />
        <rect x="6" y="0" width="70" height="23" rx="6" />
        <rect x="14" y="23" width="128" height="12" rx="4" />
        <path d="M0 35q0-2 3-2h60q3 2 3 5v12H0z" />
        <path d="M64 37q20-3 38 2t38-2M66 45q16-9 36-6t30 5M68 41l14 5 18-6 14 7 22-9M66 47q20-6 40-3t34-4M70 38l20 9 22-9 18 8M76 35l30 10 28-8M84 47l20-8 18 7 16-6" fill="none" stroke="#111" strokeWidth="1" />
      </svg>
      <svg viewBox="0 0 20 210" className="absolute right-[68px] bottom-5 h-[210px] w-5" fill="#d9d9d9" aria-hidden="true">
        <circle cx="9" cy="1" r="1" /><circle cx="8" cy="130" r=".7" /><circle cx="7" cy="177" r="1.200" /><circle cx="11" cy="182" r="1.200" /><circle cx="9" cy="203" r="1.500" /><circle cx="13" cy="203" r=".8" />
      </svg>
    </article>
  );
}

export default function App() {
  return (
    <div className="grid min-h-screen grid-cols-[71fr_57fr] content-center items-start overflow-hidden bg-black font-['Liberation_Sans',Arial,sans-serif]">
      <AccountingWindow />
      <ReaderWindow />
    </div>
  );
}
